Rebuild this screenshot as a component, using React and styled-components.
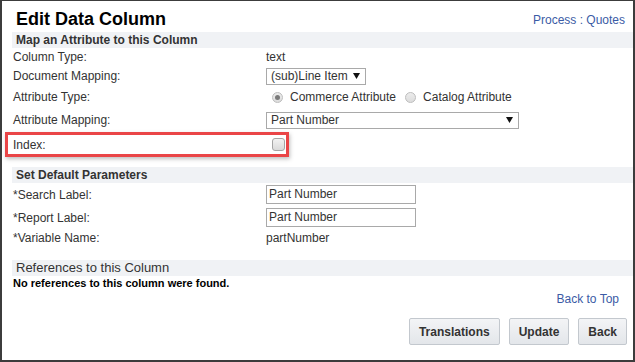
import React from "react";
import styled, { createGlobalStyle } from "styled-components";

const Global = createGlobalStyle`
  html, body { margin: 0; padding: 0; background: #fff; }
  body { font-family: "Liberation Sans", Arial, sans-serif; }
  * { box-sizing: border-box; }
`;

const Frame = styled.div`
  width: 635px;
  height: 362px;
  border: 2px solid #3c3c3c;
  border-top-width: 1px;
  background: #fff;
  padding-left: 10px;
  color: #333;
  font-size: 12px;
  overflow: hidden;
`;

const Header = styled.div`
  height: 31px;
  display: flex;
  justify-content: space-between;
  align-items: flex-start;
  padding-right: 8px;
`;

const Title = styled.h1`
  margin: 8px 0 0 4px;
  font-size: 18px;
  line-height: 21px;
  font-weight: bold;
  color: #000;
`;

const Link = styled.a`
  color: #3b5ba5;
  font-size: 12px;
  line-height: 14px;
  text-decoration: none;
  margin-top: ${(p) => p.$mt || 0}px;
`;

const Band = styled.div`
  height: 16px;
  line-height: 16px;
  background: #f0f2f5;
  padding-left: 4px;
  font-size: ${(p) => (p.$light ? 13 : 12)}px;
  font-weight: ${(p) => (p.$light ? "normal" : "bold")};
  color: #333;
  margin-top: ${(p) => p.$mt || 0}px;
`;

const Row = styled.div`
  display: grid;
  grid-template-columns: 253px 1fr;
  align-items: center;
  height: ${(p) => p.$h}px;
  padding-left: 1px;
`;

const Value = styled.div`
  display: flex;
  align-items: center;
`;

const SelectBox = styled.div`
  width: ${(p) => p.$w}px;
  height: 17px;
  border: 1px solid #a9a9a9;
  display: flex;
  align-items: center;
  justify-content: space-between;
  padding: 0 5px 0 4px;
  color: #333;
  background: #fff;
  line-height: 15px;
`;

const Radio = styled.span`
  width: 11px;
  height: 11px;
  border-radius: 50%;
  border: 1px solid #bdbdbd;
  background: linear-gradient(#ececec, #dcdcdc);
  display: inline-flex;
  align-items: center;
  justify-content: center;
  margin-left: ${(p) => p.$ml}px;
  margin-right: 7px;
  &::after {
    content: "";
    width: 5px;
    height: 5px;
    border-radius: 50%;
    background: ${(p) => (p.$on ? "#7a7a7a" : "transparent")};
  }
`;

const Highlight = styled.div`
  margin-left: -7px;
  width: 284px;
  height: 25px;
  border: 3px solid #ea4547;
  box-shadow: 1px 2px 4px rgba(0, 0, 0, 0.25);
  display: grid;
  grid-template-columns: 256px 1fr;
  align-items: center;
  padding-left: 5px;
`;

const Check = styled.span`
  width: 13px;
  height: 13px;
  border: 1px solid #a5a5a5;
  border-radius: 3px;
  background: linear-gradient(#f2f2f2, #dadada);
  margin-left: 3px;
`;

const Input = styled.div`
  width: 150px;
  height: 19px;
  border: 1px solid #a9a9a9;
  padding-left: 2px;
  line-height: 17px;
  color: #333;
`;

const Note = styled.div`
  height: 15px;
  line-height: 15px;
  font-size: 11px;
  font-weight: bold;
  color: #000;
  padding-left: 1px;
`;

const TopRow = styled.div`
  height: 15px;
  display: flex;
  justify-content: flex-end;
  align-items: center;
  padding-right: 14px;
`;

const Buttons = styled.div`
  margin-top: 12px;
  display: flex;
  justify-content: flex-end;
  gap: 9px;
  padding-right: 6px;
`;

const Button = styled.button`
  height: 27px;
  padding: 0 9px;
  font-family: "Liberation Sans", Arial, sans-serif;
  font-size: 12px;
  font-weight: bold;
  color: #333;
  border: 1px solid #c3c8ce;
  border-radius: 2px;
  background: linear-gradient(#f3f4f6, #e3e6ea);
`;

const Arrow = () => (
  <svg width="7" height="6" viewBox="0 0 7 6">
    <path d="M0 0 H7 L3.5 6 Z" fill="#111" />
  </svg>
);

export default function App() {
  return (
    <>
      <Global />
      <Frame>
        <Header>
          <Title>Edit Data Column</Title>
          <Link $mt={12}>Process : Quotes</Link>
        </Header>
        <Band>Map an Attribute to this Column</Band>
        <Row $h={18}>
          <span>Column Type:</span>
          <Value>text</Value>
        </Row>
        <Row $h={20}>
          <span>Document Mapping:</span>
          <Value>
            <SelectBox $w={100}>
              <span>(sub)Line Item</span>
              <Arrow />
            </SelectBox>
          </Value>
        </Row>
        <Row $h={22}>
          <span>Attribute Type:</span>
          <Value>
            <Radio $on $ml={6} />
            <span>Commerce Attribute</span>
            <Radio $ml={9} />
            <span>Catalog Attribute</span>
          </Value>
        </Row>
        <Row $h={24}>
          <span>Attribute Mapping:</span>
          <Value>
            <SelectBox $w={253}>
              <span>Part Number</span>
              <Arrow />
            </SelectBox>
          </Value>
        </Row>
        <Highlight>
          <span>Index:</span>
          <Check />
        </Highlight>
        <Band $mt={10}>Set Default Parameters</Band>
        <Row $h={23}>
          <span>*Search Label:</span>
          <Value>
            <Input>Part Number</Input>
          </Value>
        </Row>
        <Row $h={23}>
          <span>*Report Label:</span>
          <Value>
            <Input>Part Number</Input>
          </Value>
        </Row>
        <Row $h={18}>
          <span>*Variable Name:</span>
          <Value>partNumber</Value>
        </Row>
        <Band $light $mt={13}>References to this Column</Band>
        <Note>No references to this column were found.</Note>
        <TopRow>
          <Link>Back to Top</Link>
        </TopRow>
        <Buttons>
          <Button>Translations</Button>
          <Button>Update</Button>
          <Button>Back</Button>
        </Buttons>
      </Frame>
    </>
  );
}
